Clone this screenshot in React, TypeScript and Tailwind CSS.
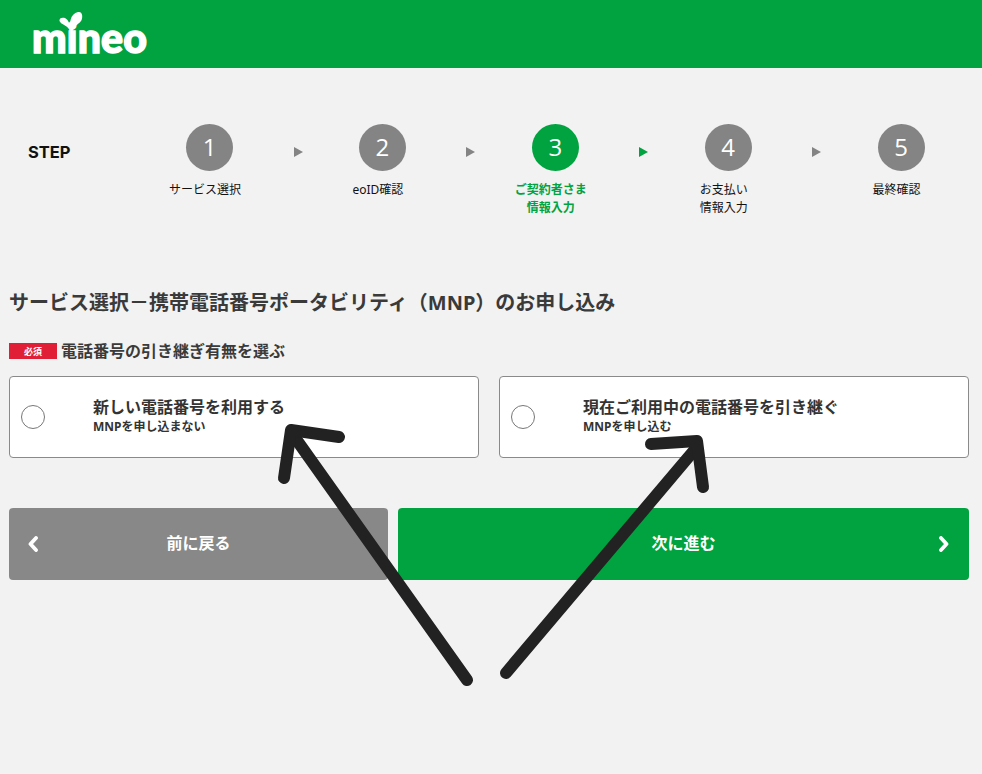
const font = "[font-family:'Noto_Sans','Noto_Sans_CJK_JP',sans-serif]";

function Logo() {
  return (
    <div className="relative h-[68px] w-[150px]">
      <span className="absolute left-[32px] top-[10px] text-[41px] font-black leading-[56px] tracking-[0.2px] text-white [font-family:'Lato',sans-serif] [-webkit-text-stroke:1.5px_white] [paint-order:stroke]">
        mineo
      </span>
      <svg className="absolute left-[58px] top-[10px]" width="26" height="26" viewBox="0 0 26 26">
        <path d="M12.5 22 C11 13 12 4 20 2 C25 1 25 8 23 11 C20 15 15 16 14.5 22 Z" fill="#fff" />
        <path d="M12 21 C10 15 3 15 1.5 11 C1 8 4 7 7 8 C11 10 12 15 13 21 Z" fill="#fff" />
      </svg>
    </div>
  );
}

const steps = [
  { n: "1", label: ["サービス選択"] },
  { n: "2", label: ["eoID確認"] },
  { n: "3", label: ["ご契約者さま", "情報入力"], active: true },
  { n: "4", label: ["お支払い", "情報入力"] },
  { n: "5", label: ["最終確認"] },
];

function Step({ n, label, active }: { n: string; label: string[]; active?: boolean }) {
  return (
    <div className="flex w-[100px] shrink-0 flex-col items-center">
      <div
        className={`ml-[9px] flex h-[47px] w-[47px] items-center justify-center rounded-full text-[24px] leading-none text-white [font-family:'Open_Sans',sans-serif] ${
          active ? "bg-[#00a33f]" : "bg-[#848484]"
        }`}
      >
        <span className="relative -top-[1px]">{n}</span>
      </div>
      <div
        className={`mt-[10px] text-center text-[12px] leading-[18px] ${
          active ? "font-bold text-[#00a33f]" : "text-[#111]"
        }`}
      >
        {label.map((l) => (
          <div key={l}>{l}</div>
        ))}
      </div>
    </div>
  );
}

function Arrow({ active }: { active?: boolean }) {
  return (
    <div className="flex h-[47px] w-[72.9px] shrink-0 items-center pl-[38.5px] pt-[9px]">
      <svg width="9" height="10" viewBox="0 0 9 10">
        <path d="M0 0 L9 5 L0 10 Z" fill={active ? "#00a33f" : "#848484"} />
      </svg>
    </div>
  );
}

function Option({ title, sub }: { title: string; sub: string }) {
  return (
    <div className="flex h-[82px] flex-1 items-center rounded-[4px] border border-[#8a8a8a] bg-white pl-[11px]">
      <div className="h-[24px] w-[24px] shrink-0 rounded-full border border-[#777] bg-white" />
      <div className="ml-[48px] text-[#333]">
        <div className="text-[16px] font-bold leading-[20px]">{title}</div>
        <div className="text-[12px] font-bold leading-[20px]">{sub}</div>
      </div>
    </div>
  );
}

export default function App() {
  return (
    <div className={`relative h-[774px] w-full overflow-hidden bg-[#f2f2f2] ${font}`}>
      <header className="h-[68px] bg-[#00a33f]">
        <Logo />
      </header>

      <div className="flex pl-[28px] pt-[56px]">
        <div className="w-[127px] shrink-0 pt-[17px] text-[16.5px] font-bold leading-[22px] text-[#111] [font-family:'Inter',sans-serif]">
          STEP
        </div>
        {steps.map((s, i) => (
          <div key={s.n} className="flex">
            <Step n={s.n} label={s.label} active={s.active} />
            {i < 4 && <Arrow active={i === 2} />}
          </div>
        ))}
      </div>

      <main className="pl-[9px] pr-[13px]">
        <h1 className="mt-[72px] text-[20px] font-bold leading-[28px] text-[#3a3a3a]">
          サービス選択－携帯電話番号ポータビリティ（MNP）のお申し込み
        </h1>

        <div className="mt-[22px] flex items-center">
          <span className="flex h-[16px] w-[48px] items-center justify-center bg-[#e01f36] text-[9px] font-bold leading-none text-white">
            必須
          </span>
          <span className="ml-[4px] text-[16px] font-bold leading-[24px] text-[#3a3a3a]">
            電話番号の引き継ぎ有無を選ぶ
          </span>
        </div>

        <div className="mt-[13px] flex gap-[20px]">
          <Option title="新しい電話番号を利用する" sub="MNPを申し込まない" />
          <Option title="現在ご利用中の電話番号を引き継ぐ" sub="MNPを申し込む" />
        </div>

        <div className="mt-[50px] flex gap-[10px]">
          <button className="relative flex h-[72px] w-[379px] items-center justify-center rounded-[4px] bg-[#888] pb-[2px] text-[16px] font-bold text-white">
            <svg className="absolute left-[18px] top-[28px]" width="12" height="16" viewBox="0 0 12 16">
              <path d="M9 2 L3.5 8 L9 14" fill="none" stroke="#fff" strokeWidth="3.8" strokeLinecap="round" strokeLinejoin="round" />
            </svg>
            前に戻る
          </button>
          <button className="relative flex h-[72px] flex-1 items-center justify-center rounded-[4px] bg-[#00a33f] pb-[2px] text-[16px] font-bold text-white">
            次に進む
            <svg className="absolute right-[19px] top-[28px]" width="12" height="16" viewBox="0 0 12 16">
              <path d="M3 2 L8.5 8 L3 14" fill="none" stroke="#fff" strokeWidth="3.8" strokeLinecap="round" strokeLinejoin="round" />
            </svg>
          </button>
        </div>
      </main>

      <svg className="pointer-events-none absolute inset-0" width="982" height="774" viewBox="0 0 982 774">
        <g fill="none" stroke="#222" strokeWidth="12" strokeLinecap="round" strokeLinejoin="round">
          <path d="M467 680 L291 432" />
          <path d="M284 478 L291 430 L339 437" />
          <path d="M506 673 L697 447" />
          <path d="M651 444 L697 441 L703 487" />
        </g>
      </svg>
    </div>
  );
}
